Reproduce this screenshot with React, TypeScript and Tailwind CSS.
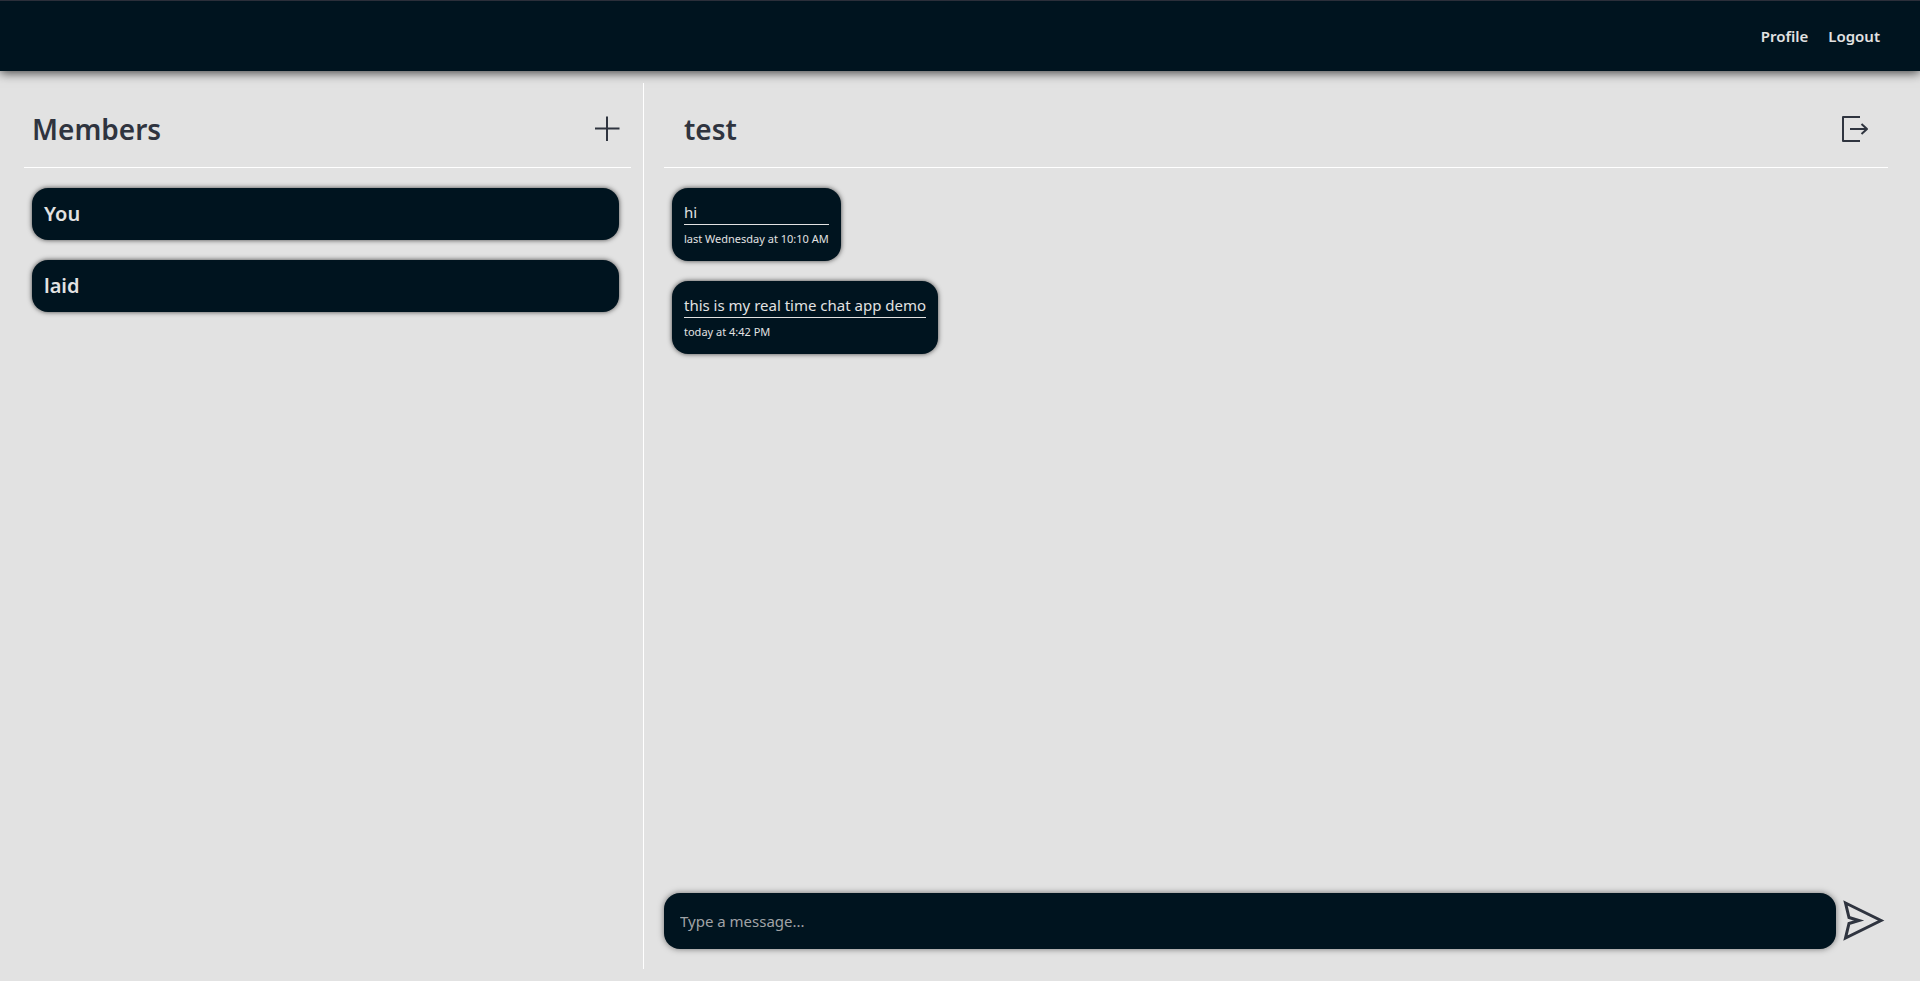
import { useState, type FormEvent } from "react";

const members = ["You", "laid"];

const initialMessages = [
  { text: "hi", time: "last Wednesday at 10:10 AM" },
  { text: "this is my real time chat app demo", time: "today at 4:42 PM" },
];

function PlusIcon() {
  return (
    <svg viewBox="0 0 32 32" className="size-8" fill="none" stroke="currentColor" strokeWidth="2" aria-hidden>
      <path d="M16 3.5v24.5M4 15.500h24.5" />
    </svg>
  );
}

function LeaveIcon() {
  return (
    <svg viewBox="0 0 32 32" className="size-8" fill="none" stroke="currentColor" strokeWidth="2" strokeLinejoin="round" aria-hidden>
      <path d="M20 4H3V28H20" />
      <path d="M10 16H27M21.5 11L27 16L21.5 21" />
    </svg>
  );
}

function SendIcon() {
  return (
    <svg viewBox="0 0 48 48" className="size-12" fill="none" stroke="currentColor" strokeWidth="3" aria-hidden>
      <path d="M5.500 6L41 23.500L5.500 41L9 26.500L19 23.500L9 20.500Z" />
    </svg>
  );
}

export default function App() {
  const [messages, setMessages] = useState(initialMessages);
  const [draft, setDraft] = useState("");

  function handleSubmit(e: FormEvent) {
    e.preventDefault();
    if (!draft.trim()) return;
    setMessages([...messages, { text: draft, time: "just now" }]);
    setDraft("");
  }

  return (
    <div className="flex min-h-screen flex-col bg-[#e2e2e2] font-['Noto_Sans',sans-serif] text-[#2f343f]">
      {/* Navbar */}
      <header className="border-t border-[#2b2f3a] bg-[#00141f] shadow-[0_2px_10px_rgba(0,0,0,0.7)]">
        <nav className="flex h-[70px] items-center justify-end gap-5 px-10 text-[15px] font-semibold text-[#e2e2e2]">
          <a href="#profile">Profile</a>
          <a href="#logout">Logout</a>
        </nav>
      </header>

      <main className="flex flex-1 p-3">
        {/* Members */}
        <aside className="w-1/3 border-r border-white px-3">
          <div className="flex items-center justify-between border-b border-white px-2 pt-7 pb-5">
            <h2 className="text-[28px] leading-9 font-semibold">Members</h2>
            <button type="button" aria-label="Add member">
              <PlusIcon />
            </button>
          </div>
          <ul className="flex flex-col gap-5 pt-5 pr-3 pl-2">
            {members.map((name) => (
              <li
                key={name}
                className="rounded-2xl bg-[#00141f] p-3 text-xl font-semibold text-[#e2e2e2] shadow-[0_0_5px_rgba(0,0,0,0.7)]"
              >
                {name}
              </li>
            ))}
          </ul>
        </aside>

        {/* Chat */}
        <section className="flex flex-1 flex-col px-5">
          <div className="flex items-center justify-between border-b border-white pt-7 pr-4 pb-5 pl-5">
            <h2 className="text-[28px] leading-9 font-semibold">test</h2>
            <button type="button" aria-label="Leave room">
              <LeaveIcon />
            </button>
          </div>
          <ul className="flex flex-1 flex-col items-start gap-5 px-2 pt-5">
            {messages.map((message) => (
              <li
                key={message.text}
                className="rounded-2xl bg-[#00141f] p-3 text-[#e2e2e2] shadow-[0_0_5px_rgba(0,0,0,0.7)]"
              >
                <p className="border-b border-[#e2e2e2] text-[15px] leading-6">{message.text}</p>
                <p className="pt-1 text-[11px] leading-5">{message.time}</p>
              </li>
            ))}
          </ul>
          <form onSubmit={handleSubmit} className="flex items-center gap-1 pb-5">
            <input
              type="text"
              aria-label="Message"
              placeholder="Type a message..."
              value={draft}
              onChange={(e) => setDraft(e.target.value)}
              className="h-14 flex-1 rounded-2xl bg-[#00141f] px-4 text-[15px] text-[#e2e2e2] shadow-[0_0_6px_rgba(0,0,0,0.5)] outline-none placeholder:text-[#a0a3a6]"
            />
            <button type="submit" aria-label="Send">
              <SendIcon />
            </button>
          </form>
        </section>
      </main>
    </div>
  );
}
